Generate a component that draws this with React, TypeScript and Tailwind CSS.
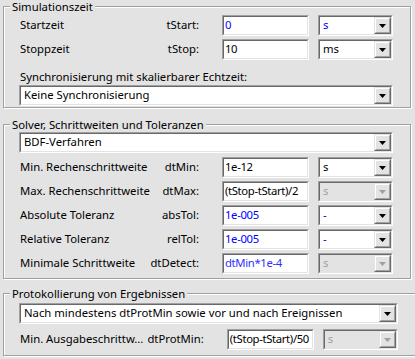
import React from "react";

const Sunken = ({
  children,
  className = "",
  bg = "bg-white",
}: {
  children?: React.ReactNode;
  className?: string;
  bg?: string;
}) => (
  <div
    className={`border border-t-[#a0a0a0] border-l-[#a0a0a0] border-b-white border-r-white ${className}`}
  >
    <div
      className={`h-full w-full border border-t-[#696969] border-l-[#696969] border-b-[#e3e3e3] border-r-[#e3e3e3] ${bg} flex items-center overflow-hidden`}
    >
      {children}
    </div>
  </div>
);

const Arrow = ({ disabled }: { disabled?: boolean }) => (
  <div className="h-full w-[17px] shrink-0 border border-t-[#e3e3e3] border-l-[#e3e3e3] border-b-[#696969] border-r-[#696969]">
    <div className="h-full w-full border border-t-white border-l-white border-b-[#a0a0a0] border-r-[#a0a0a0] bg-[#e3e3e3] flex items-center justify-center">
      <svg width="7" height="4" viewBox="0 0 7 4">
        <path d="M0 0H7L3.5 4Z" fill={disabled ? "#a0a0a0" : "#000"} />
      </svg>
    </div>
  </div>
);

const Field = ({ value, color = "text-black" }: { value: string; color?: string }) => (
  <Sunken className="w-[87px] h-[21px] shrink-0">
    <span className={`pl-[1px] whitespace-nowrap tracking-[-0.35px] ${color}`}>{value}</span>
  </Sunken>
);

const Combo = ({
  value,
  color = "text-black",
  disabled,
  className = "w-[75px]",
}: {
  value: string;
  color?: string;
  disabled?: boolean;
  className?: string;
}) => (
  <Sunken className={`h-[21px] shrink-0 ${className}`} bg={disabled ? "bg-[#e3e3e3]" : "bg-white"}>
    <span
      className={`flex-1 pl-[3px] whitespace-nowrap ${disabled ? "text-[#a0a0a0]" : color}`}
    >
      {value}
    </span>
    <Arrow disabled={disabled} />
  </Sunken>
);

const Row = ({
  label,
  name,
  value,
  valueColor,
  unit,
  unitColor,
  unitDisabled,
}: {
  label: string;
  name: string;
  value: string;
  valueColor?: string;
  unit: string;
  unitColor?: string;
  unitDisabled?: boolean;
}) => (
  <div className="flex items-center h-[21px]">
    <span className="flex-1 pl-[1px] whitespace-nowrap">{label}</span>
    <span className="whitespace-nowrap pl-[4px] pr-[1px]">{name}</span>
    <div className="w-[22px]" />
    <Field value={value} color={valueColor} />
    <div className="w-[9px]" />
    <Combo value={unit} color={unitColor} disabled={unitDisabled} />
  </div>
);

const groupCls =
  "border border-[#a0a0a0] shadow-[1px_1px_0_white,inset_1px_1px_0_white] pl-[15px] pr-[17px] mr-[1px]";
const legendCls = "ml-[-9px] px-[2px] leading-[13px] bg-[#e3e3e3]";

export default function App() {
  return (
    <div className="w-[415px] h-[359px] bg-[#e3e3e3] pl-[3px] pr-[3px] flex flex-col text-[11.3px] text-black font-['Noto_Sans',sans-serif] overflow-hidden">
      <fieldset className={`${groupCls} h-[108px]`}>
        <legend className={legendCls}>Simulationszeit</legend>
        <div className="mt-[2px] flex flex-col gap-[3px]">
          <Row
            label="Startzeit"
            name="tStart:"
            value="0"
            valueColor="text-[#0000ff]"
            unit="s"
            unitColor="text-[#0000ff]"
          />
          <Row label="Stoppzeit" name="tStop:" value="10" unit="ms" />
        </div>
        <div className="mt-[10px] leading-[14px] pl-[1px]">
          Synchronisierung mit skalierbarer Echtzeit:
        </div>
        <Combo value="Keine Synchronisierung" className="w-full mt-[1px]" />
      </fieldset>

      <fieldset className={`${groupCls} mt-[10px] h-[161px]`}>
        <legend className={legendCls}>Solver, Schrittweiten und Toleranzen</legend>
        <Combo value="BDF-Verfahren" className="w-full mt-[1px]" />
        <div className="mt-[4px] flex flex-col gap-[3px]">
          <Row label="Min. Rechenschrittweite" name="dtMin:" value="1e-12" unit="s" />
          <Row
            label="Max. Rechenschrittweite"
            name="dtMax:"
            value="(tStop-tStart)/2"
            unit="s"
            unitDisabled
          />
          <Row
            label="Absolute Toleranz"
            name="absTol:"
            value="1e-005"
            valueColor="text-[#0000ff]"
            unit="-"
            unitColor="text-[#0000ff]"
          />
          <Row
            label="Relative Toleranz"
            name="relTol:"
            value="1e-005"
            valueColor="text-[#0000ff]"
            unit="-"
            unitColor="text-[#0000ff]"
          />
          <Row
            label="Minimale Schrittweite"
            name="dtDetect:"
            value="dtMin*1e-4"
            valueColor="text-[#3030ff]"
            unit="s"
            unitDisabled
          />
        </div>
      </fieldset>

      <fieldset className={`${groupCls} mt-[8px] h-[69px]`}>
        <legend className={legendCls}>Protokollierung von Ergebnissen</legend>
        <Combo
          value="Nach mindestens dtProtMin sowie vor und nach Ereignissen"
          className="w-full mt-[3px]"
        />
        <div className="mt-[5px]">
          <Row
            label="Min. Ausgabeschrittw..."
            name="dtProtMin:"
            value="(tStop-tStart)/50"
            unit="s"
            unitDisabled
          />
        </div>
      </fieldset>
    </div>
  );
}
